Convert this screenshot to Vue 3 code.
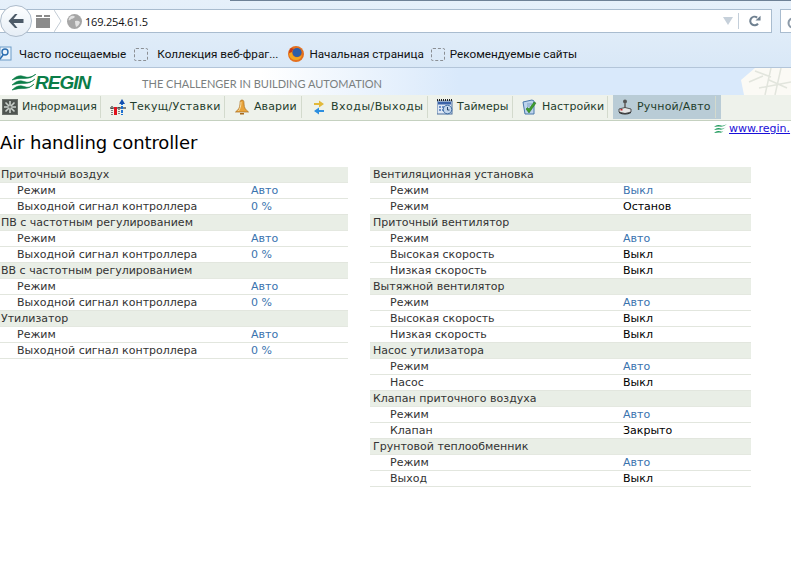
<template>
  <div class="page">
    <!-- browser chrome -->
    <div class="chrome">
      <div class="toolbar">
        <button class="back">
          <svg width="18" height="16" viewBox="0 0 18 16"><path d="M8 1 L1.5 8 L8 15 L10.5 15 L6.5 10 L16.5 10 L16.5 6 L6.5 6 L10.5 1 Z" fill="#4c5a68" /></svg>
        </button>
        <div class="urlbar">
          <svg class="tabs-icon" width="15" height="13" viewBox="0 0 15 13"><path d="M0 0h6v2H0zM8 0h6v2H8zM0 3h14v10H0z" fill="#8b8b8b" /></svg>
          <svg class="chevron" width="8" height="22" viewBox="0 0 8 22"><path d="M0 0 L7 11 L0 22" fill="none" stroke="#c3ccd5" /></svg>
          <svg class="globe" width="15" height="15" viewBox="0 0 15 15">
            <circle cx="7.5" cy="7.5" r="7.5" fill="#a6a6a6" />
            <path d="M4 2 Q7 1 8 3 Q6 5 4 5 Q3 7 1.5 6 Q2 3 4 2ZM8 7 Q11 6 13 8 Q12 12 9 13 Q8 10 8 7Z" fill="#e2e2e2" />
          </svg>
          <span class="url">169.254.61.5</span>
          <svg class="drop" width="10" height="8" viewBox="0 0 10 8"><path d="M0 0h10L5 8z" fill="#c6d0da" /></svg>
          <span class="url-sep"></span>
          <svg class="reload" width="12" height="12" viewBox="0 0 14 14">
            <path d="M10.5 10 A5 5 0 1 1 9.5 3" fill="none" stroke="#6f8090" stroke-width="2.4" />
            <path d="M7.5 6.5 L13.5 6.5 L13.5 1 Z" fill="#6f8090" />
          </svg>
        </div>
        <div class="search">
          <svg width="12" height="12" viewBox="0 0 12 12"><circle cx="8" cy="6" r="4.5" fill="none" stroke="#8c9aa8" stroke-width="2" /></svg>
        </div>
      </div>
      <div class="bookmarks">
        <svg class="bm-first" width="13" height="16" viewBox="0 0 13 16">
          <rect x="0" y="1" width="11" height="13" fill="#eaf3fb" stroke="#6d9cc8" />
          <circle cx="5" cy="6" r="3" fill="none" stroke="#2a6db0" stroke-width="1.4" />
          <path d="M3 9 L0 13" stroke="#2a6db0" stroke-width="1.6" />
        </svg>
        <span class="bm-text first">Часто посещаемые</span>
        <span class="dashed wide"></span>
        <span class="bm-text after-wide">Коллекция веб-фраг...</span>
        <svg class="fox" width="16" height="16" viewBox="0 0 16 16">
          <circle cx="8" cy="8" r="8" fill="#e4701e" />
          <circle cx="9" cy="6.5" r="4.6" fill="#2d5fa8" />
          <path d="M1 8 Q2 14 8 14 Q13 14 14 9 Q11 12 7 11 Q4 10 4 6 Q2 6 1 8Z" fill="#f2a61f" />
          <path d="M3 2 Q1 4 1 7 L4 6 Q4 4 6 3Z" fill="#c8391b" />
        </svg>
        <span class="bm-text">Начальная страница</span>
        <span class="dashed"></span>
        <span class="bm-text">Рекомендуемые сайты</span>
      </div>
    </div>

    <!-- regin banner -->
    <div class="banner">
      <div class="logo">
        <svg width="24" height="17" viewBox="0 0 24 17">
          <g fill="#0b7d48" stroke="#0b7d48" stroke-width="0.6">
            <path d="M0 6 Q6 0 12 2.5 T24 0 Q19 5 12 4.5 T0 6Z" />
            <path d="M0 11 Q6 5 12 7.5 T23 5 Q18 10 12 9.5 T0 11Z" />
            <path d="M0 16 Q6 10 12 12.5 T22 10 Q17 15 12 14.5 T0 16Z" />
          </g>
        </svg>
        <span class="logo-text">REGIN</span>
      </div>
      <span class="tagline">THE CHALLENGER IN BUILDING AUTOMATION</span>
      <svg class="banner-pic" width="50" height="27" viewBox="0 0 50 27">
        <path d="M0 12 L14 0 H50 V27 H3 Z" fill="#fbfaf5" />
        <path d="M14 3 L30 9 M8 14 L22 8 M30 0 L24 27 M40 0 L34 27 M18 20 L50 14 M28 12 L46 20" stroke="#e2e5dd" stroke-width="1.5" fill="none" />
      </svg>
    </div>
    <nav class="nav">
      <div v-for="item in navItems" :key="item.label" class="nav-item" :class="{ active: item.active }">
        <svg class="nav-icon" width="16" height="16" viewBox="0 0 16 16" v-html="item.icon"></svg>
        <span class="nav-label" :style="{ width: item.width + 'px', letterSpacing: item.spacing + 'px' }">{{ item.label }}</span>
        <span class="nav-sep"></span>
      </div>
    </nav>

    <div class="link-row">
      <svg width="13" height="9" viewBox="0 0 13 9">
        <g fill="#1f9a5c">
          <path d="M0 3 Q3 0 6 1.3 T13 0 Q10 3 6 2.6 T0 3Z" />
          <path d="M0 6 Q3 3 6 4.3 T12 3 Q9 6 6 5.6 T0 6Z" />
          <path d="M0 9 Q3 6 6 7.3 T11 6 Q8 9 6 8.6 T0 9Z" />
        </g>
      </svg>
      <a class="link" href="#">www.regin.</a>
    </div>
    <h1 class="title">Air handling controller</h1>

    <div class="tables">
      <div v-for="(col, i) in columns" :key="i" class="column" :class="i === 0 ? 'col-left' : 'col-right'">
        <template v-for="group in col" :key="group.name">
          <div class="group-head">{{ group.name }}</div>
          <div v-for="row in group.rows" :key="row[0] + row[1]" class="row">
            <span class="row-label">{{ row[0] }}</span>
            <span class="row-value" :class="{ plain: row[2] }">{{ row[1] }}</span>
          </div>
        </template>
      </div>
    </div>
  </div>
</template>

<script setup>
const navItems = [
  {
    label: 'Информация',
    width: 73,
    spacing: 0,
    icon: '<rect width="16" height="16" fill="#6b716c"/><rect x="1" y="1" width="14" height="14" fill="#4f5551"/><g stroke="#c9d0cb" stroke-width="1.6"><path d="M8 2v12M2 8h12M3.5 3.5l9 9M12.5 3.5l-9 9"/></g><circle cx="8" cy="8" r="1.6" fill="#6b716c"/>',
  },
  {
    label: 'Текущ/Уставки',
    width: 89,
    spacing: 0.3,
    icon: '<path d="M0 9h16" stroke="#111" stroke-width="1"/><rect x="4" y="8" width="3" height="8" fill="#e0121c"/><path d="M2 7v9" stroke="#111" stroke-dasharray="1 1"/><path d="M12 3v13" stroke="#1d6fd0" stroke-width="2" stroke-dasharray="3 1"/><path d="M9 5l3-5 3 5z" fill="#1550b0"/><path d="M9 8v8" stroke="#111" stroke-dasharray="1 1"/>',
  },
  {
    label: 'Аварии',
    width: 42,
    spacing: 0.1,
    icon: '<path d="M8 1 C6 1 6 3 6 5 C6 9 4 11 1.5 13 H14.5 C12 11 10 9 10 5 C10 3 10 1 8 1Z" fill="#e8a33a" stroke="#a86a1a" stroke-width=".7"/><path d="M7 3 C7 7 6 10 4.5 12" stroke="#f9dfa5" fill="none"/><path d="M6 14h4v1.5H6z" fill="#a86a1a"/>',
  },
  {
    label: 'Входы/Выходы',
    width: 91,
    spacing: 0.5,
    icon: '<path d="M3 5h5V2.5L13 6l-5 3.5V7H3z" fill="#e2b93a" transform="translate(0 -1)"/><path d="M13 11H8V8.5L3 12l5 3.5V13h5z" fill="#2c8fe0"/>',
  },
  {
    label: 'Таймеры',
    width: 50,
    spacing: 0,
    icon: '<rect x="0" y="2" width="15" height="13" fill="#dfe8f4" stroke="#4b6f9e"/><path d="M0 1h15" stroke="#222" stroke-dasharray="1 1" stroke-width="2"/><rect x="1" y="3" width="13" height="2.5" fill="#3a62a8"/><g fill="#6f92c6"><rect x="2" y="7" width="2" height="2"/><rect x="5" y="7" width="2" height="2"/><rect x="2" y="10" width="2" height="2"/><rect x="5" y="10" width="2" height="2"/></g><circle cx="10.5" cy="10.5" r="4.3" fill="#c3d6ec" stroke="#3c6aa0"/><path d="M10.5 8v3h2" stroke="#24456e" fill="none"/>',
  },
  {
    label: 'Настройки',
    width: 60,
    spacing: 0,
    icon: '<path d="M1 3 L10 1 L12 2 V15 H3 Z" fill="#bcd3ec" stroke="#4a78ab"/><path d="M5 5h5M5 7h3" stroke="#7fa0c6"/><path d="M4 10 L7 14 L14 4 L12 3 L7 10 L5.5 8.5 Z" fill="#3f9e2c" stroke="#1e6a14" stroke-width=".5"/>',
  },
  {
    label: 'Ручной/Авто',
    width: 73,
    spacing: 0.2,
    active: true,
    icon: '<circle cx="8" cy="2.5" r="2" fill="#555"/><rect x="7" y="4" width="2" height="6" fill="#777"/><path d="M2 10 Q8 7 14 10 V13 Q8 16 2 13 Z" fill="#e6e6e6" stroke="#333" stroke-width=".8"/><path d="M2 13 Q8 16 14 13 V14 Q8 17 2 14 Z" fill="#222"/><rect x="3.5" y="10" width="2" height="1.5" fill="#c8242c"/>',
  },
]

const auto = ['Режим', 'Авто']
const out = ['Выходной сигнал контроллера', '0 %']
const columns = [
  [
    { name: 'Приточный воздух', rows: [auto, out] },
    { name: 'ПВ с частотным регулированием', rows: [auto, out] },
    { name: 'ВВ с частотным регулированием', rows: [auto, out] },
    { name: 'Утилизатор', rows: [auto, out] },
  ],
  [
    { name: 'Вентиляционная установка', rows: [['Режим', 'Выкл'], ['Режим', 'Останов', true]] },
    { name: 'Приточный вентилятор', rows: [auto, ['Высокая скорость', 'Выкл', true], ['Низкая скорость', 'Выкл', true]] },
    { name: 'Вытяжной вентилятор', rows: [auto, ['Высокая скорость', 'Выкл', true], ['Низкая скорость', 'Выкл', true]] },
    { name: 'Насос утилизатора', rows: [auto, ['Насос', 'Выкл', true]] },
    { name: 'Клапан приточного воздуха', rows: [auto, ['Клапан', 'Закрыто', true]] },
    { name: 'Грунтовой теплообменник', rows: [auto, ['Выход', 'Выкл', true]] },
  ],
]
</script>

<style scoped>
.page {
  width: 791px;
  height: 562px;
  overflow: hidden;
  background: #fff;
  font-family: "DejaVu Sans", Verdana, sans-serif;
}

.chrome {
  height: 68px;
  background: linear-gradient(#e6f0fa, #d9e8f7);
  border-bottom: 1px solid #b3c5d9;
  box-sizing: border-box;
  background-clip: padding-box;
  position: relative;
}
.chrome::before {
  content: '';
  position: absolute;
  top: 0;
  left: 230px;
  right: 0;
  height: 1px;
  background: #6e8196;
}

.toolbar {
  display: flex;
  height: 33px;
  padding-top: 9px;
  box-sizing: border-box;
  position: relative;
}
.back {
  position: absolute;
  left: 0;
  top: 5px;
  width: 32px;
  height: 32px;
  padding: 0;
  border: 1px solid #aebccb;
  border-radius: 50%;
  background: linear-gradient(#fdfeff, #e6eef6);
  display: flex;
  align-items: center;
  justify-content: center;
  z-index: 1;
}
.urlbar {
  flex: none;
  width: 772px;
  height: 24px;
  box-sizing: border-box;
  background: #fff;
  border: 1px solid #a9bccf;
  border-left: 0;
  display: flex;
  align-items: center;
  padding-left: 36px;
}
.tabs-icon {
  margin-right: 3px;
}
.chevron {
  margin-right: 5px;
}
.globe {
  margin-right: 3px;
}
.url {
  font: 11px "Open Sans", "Noto Sans", sans-serif;
  letter-spacing: -0.2px;
  color: #111;
  flex: 1;
}
.drop {
  margin-right: 5px;
}
.url-sep {
  width: 1px;
  height: 16px;
  background: #c4cfda;
  margin-right: 10px;
}
.reload {
  margin-right: 10px;
}
.search {
  margin-left: 8px;
  flex: 1;
  height: 24px;
  box-sizing: border-box;
  background: #fff;
  border: 1px solid #a9bccf;
  border-right: 0;
  padding: 4px 0 0 4px;
}

.bookmarks {
  display: flex;
  align-items: center;
  height: 20px;
  margin-top: 11px;
  font: 11.7px Roboto, "Open Sans", sans-serif;
  color: #111;
}
.bm-first {
  margin-right: 6px;
}
.bm-text {
  white-space: nowrap;
  margin-right: 7px;
}
.bm-text.first {
  margin-right: 8px;
}
.bm-text.after-wide {
  margin-right: 10px;
}
.dashed {
  width: 14px;
  height: 13px;
  box-sizing: border-box;
  border: 1px dashed #8b8f94;
  border-radius: 2px;
  margin-right: 5px;
}
.dashed.wide {
  margin-right: 9px;
}
.fox {
  margin-right: 5px;
}

.banner {
  height: 27px;
  display: flex;
  align-items: center;
  background: linear-gradient(90deg, #fff 33%, #d9e9fb 58%, #d9e9fb 92%);
  position: relative;
}
.logo {
  display: flex;
  align-items: center;
  width: 142px;
  padding: 2px 0 0 12px;
  box-sizing: border-box;
}
.logo-text {
  font: italic bold 19px "Liberation Sans", Arial, sans-serif;
  color: #0b7d48;
  letter-spacing: -1px;
  margin-left: -1px;
}
.tagline {
  font: 11px "Lato", "Open Sans", sans-serif;
  color: #7a7f80;
  white-space: nowrap;
  margin-top: 3px;
}
.banner-pic {
  position: absolute;
  right: 0;
  top: 0;
}

.nav {
  display: flex;
  height: 26px;
  box-sizing: border-box;
  background: #eef2eb;
  border-bottom: 1px solid #c5d1c0;
  font-size: 11px;
  color: #1f3d2c;
}
.nav-item {
  display: flex;
  align-items: center;
  height: 24px;
  box-sizing: border-box;
  padding: 0 0 1px 4px;
  white-space: nowrap;
}
.nav-item:first-child {
  padding-left: 2px;
}
.nav-item.active {
  background: #b9ccd6;
}
.nav-icon {
  margin-right: 4px;
  flex: none;
}
.nav-sep {
  width: 1px;
  height: 22px;
  background: #d3dacd;
  margin: 0 5px;
}

.link-row {
  height: 14px;
  padding-left: 714px;
  display: flex;
  align-items: center;
  gap: 2px;
  white-space: nowrap;
}
.link-row svg {
  flex: none;
}
.link {
  font-size: 11px;
  color: #1a0fd8;
}
.title {
  margin: 0;
  font-size: 18px;
  font-weight: 400;
  color: #000;
  line-height: 16px;
  letter-spacing: -0.13px;
}

.tables {
  display: flex;
  gap: 22px;
  margin-top: 16px;
  align-items: flex-start;
}
.column {
  font-size: 11px;
}
.col-left {
  width: 350px;
  margin-left: -2px;
}
.col-right {
  width: 381px;
}
.group-head {
  height: 16px;
  box-sizing: border-box;
  line-height: 15px;
  padding-left: 3px;
  background: #e9eee6;
  color: #333;
  border-bottom: 1px solid #e4e8e0;
  white-space: nowrap;
}
.row {
  display: grid;
  grid-template-columns: 253px 1fr;
  height: 16px;
  box-sizing: border-box;
  line-height: 15px;
  border-bottom: 1px solid #e2e6de;
  white-space: nowrap;
}
.row-label {
  padding-left: 20px;
  color: #333;
}
.col-left .row-label {
  padding-left: 19px;
}
.row-value {
  color: #3a73ae;
}
.row-value.plain {
  color: #000;
}
</style>

<style>
html,
body {
  margin: 0;
  overflow: hidden;
  background: #fff;
}
</style>
